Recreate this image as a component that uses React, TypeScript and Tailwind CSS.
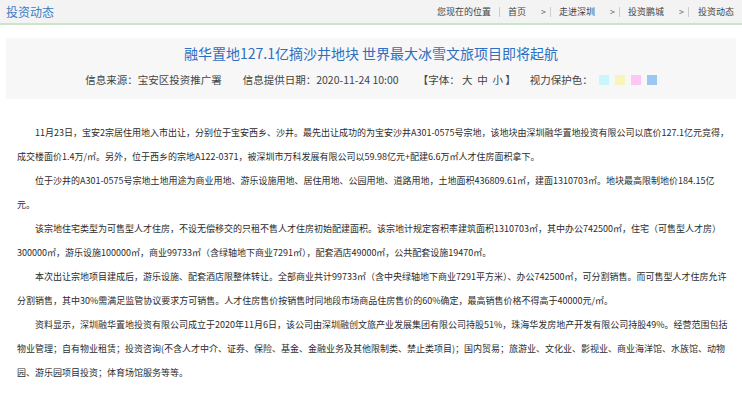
const paragraphs = [
  "11月23日，宝安2宗居住用地入市出让，分别位于宝安西乡、沙井。最先出让成功的为宝安沙井A301-0575号宗地，该地块由深圳融华置地投资有限公司以底价127.1亿元竞得，成交楼面价1.4万/㎡。另外，位于西乡的宗地A122-0371，被深圳市万科发展有限公司以59.98亿元+配建6.6万㎡人才住房面积拿下。",
  "位于沙井的A301-0575号宗地土地用途为商业用地、游乐设施用地、居住用地、公园用地、道路用地，土地面积436809.61㎡，建面1310703㎡。地块最高限制地价184.15亿元。",
  "该宗地住宅类型为可售型人才住房，不设无偿移交的只租不售人才住房初始配建面积。该宗地计规定容积率建筑面积1310703㎡，其中办公742500㎡，住宅（可售型人才房）300000㎡，游乐设施100000㎡，商业99733㎡（含绿轴地下商业7291㎡），配套酒店49000㎡，公共配套设施19470㎡。",
  "本次出让宗地项目建成后，游乐设施、配套酒店限整体转让。全部商业共计99733㎡（含中央绿轴地下商业7291平方米）、办公742500㎡，可分割销售。而可售型人才住房允许分割销售，其中30%需满足监管协议要求方可销售。人才住房售价按销售时同地段市场商品住房售价的60%确定，最高销售价格不得高于40000元/㎡。",
  "资料显示，深圳融华置地投资有限公司成立于2020年11月6日，该公司由深圳融创文旅产业发展集团有限公司持股51%，珠海华发房地产开发有限公司持股49%。经营范围包括物业管理；自有物业租赁；投资咨询(不含人才中介、证券、保险、基金、金融业务及其他限制类、禁止类项目)；国内贸易；旅游业、文化业、影视业、商业海洋馆、水族馆、动物园、游乐园项目投资；体育场馆服务等等。",
];

const crumbs = ["首页", "走进深圳", "投资鹏城"];

const eyeColors = ["bg-[#c8f6fd]", "bg-[#f7f5b9]", "bg-[#fdc6f5]", "bg-[#9ac8f3]"];

export default function App() {
  return (
    <div
      className="h-[395px] w-[742px] overflow-hidden bg-white text-[#333]"
      style={{ fontFamily: '"Noto Sans CJK SC", "Noto Sans", sans-serif' }}
    >
      {/* top bar */}
      <div className="flex h-[25px] items-center justify-between border-b-2 border-[#c9e7c8] bg-[#f3f3f3] pl-[6px] pr-[8px]">
        <span className="text-[12px] text-[#3a7cc5]">投资动态</span>
        <div className="flex items-center text-[9px] text-[#444]">
          <span className="border-r border-[#ccc] pr-[8px] leading-[10px]">您现在的位置</span>
          {crumbs.map((c) => (
            <span key={c} className="flex items-center border-r border-[#ccc] pl-[8px] pr-[4px] leading-[10px]">
              {c}
              <span className="ml-[15px] text-[#666]">&gt;</span>
            </span>
          ))}
          <span className="pl-[9px] leading-[10px]">投资动态</span>
        </div>
      </div>

      {/* title block */}
      <div className="mx-[6px] mt-[13px] flex h-[61px] flex-col items-center bg-[#f7f7f7] pt-[4px]">
        <h1 className="text-[14px] leading-[22px] text-[#2e6fc2]">
          融华置地127.1亿摘沙井地块 世界最大冰雪文旅项目即将起航
        </h1>
        <div className="mt-[9px] flex items-center text-[10.5px] leading-[14px] text-[#444]">
          <span>信息来源：宝安区投资推广署</span>
          <span className="ml-[21px]">信息提供日期：2020-11-24 10:00</span>
          <span className="ml-[19px]">【字体：&nbsp;大&nbsp;&nbsp;中&nbsp;&nbsp;小&nbsp;】</span>
          <span className="ml-[14px]">视力保护色：</span>
          <span className="ml-[6px] flex gap-[6px]">
            {eyeColors.map((c) => (
              <span key={c} className={`block h-[10px] w-[10px] ${c}`} />
            ))}
          </span>
        </div>
      </div>

      {/* article */}
      <div className="mt-[22px] pl-[17px] pr-[12px] text-[9px] leading-[24px] text-[#2b2b2b]">
        {paragraphs.map((p, i) => (
          <p key={i} className="indent-[2em]">
            {p}
          </p>
        ))}
      </div>
    </div>
  );
}
